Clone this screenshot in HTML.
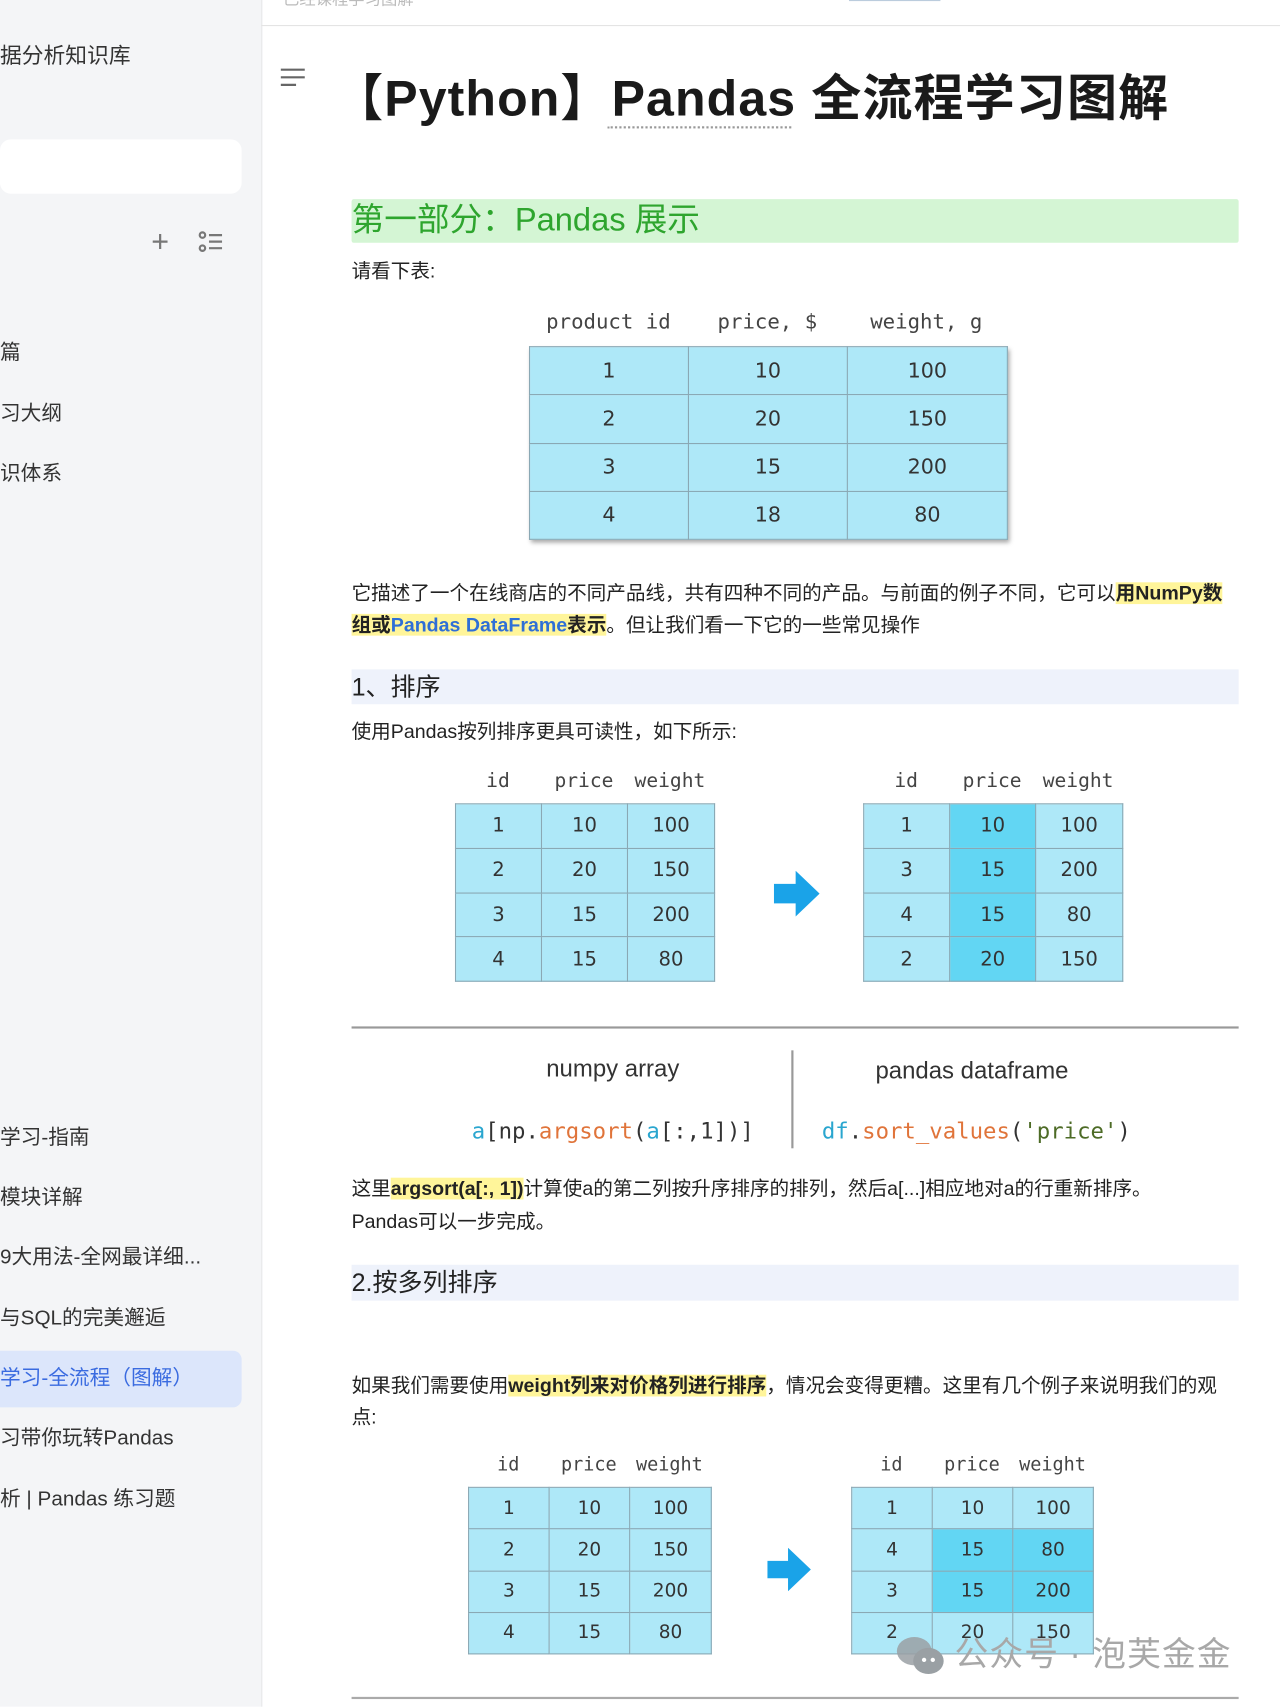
<!DOCTYPE html>
<html><head><meta charset="utf-8"><style>
html,body{margin:0;padding:0;width:1280px;height:1706px;overflow:hidden;background:#fff}
#s{position:absolute;left:0;top:0;width:1176px;height:1568px;transform:scale(1.08844);transform-origin:0 0;font-family:"Liberation Sans","Noto Sans CJK SC",sans-serif;color:#222}
.a{position:absolute;white-space:nowrap}
.side{position:absolute;left:0;top:0;width:240px;height:1568px;background:#f4f5f7;border-right:1px solid #e8e8ea}
.si{position:absolute;left:0;font-size:19px;color:#333;line-height:26px}
.p{font-size:18px;color:#222;line-height:29px}
.hl{background:#fff59a;font-weight:bold}
table{position:absolute;border-collapse:collapse;table-layout:fixed;font-family:"DejaVu Sans",sans-serif;color:#333}
td{border:1px solid #8aa8b4;background:#aee8f8;text-align:center;padding:0}
td.d{background:#62d6f3}
.hd{position:absolute;font-family:"DejaVu Sans Mono",monospace;color:#444;text-align:center}
.sec{position:absolute;left:323px;width:815px;background:#eef2fb;font-size:23px;color:#222}
.arrow{position:absolute}
</style></head><body><div id="s">
<div class="side"></div>
<div class="a" style="left:260px;top:-12px;font-size:15px;color:#bbb">已经课程学习图解</div>
<div class="a" style="left:780px;top:-2px;width:84px;height:3px;background:#bcd"></div>
<div class="a" style="left:240px;top:23px;width:936px;height:1px;background:#e4e4e4"></div>
<div class="si" style="top:39px;font-size:20px">据分析知识库</div>
<div class="a" style="left:0;top:128px;width:222px;height:50px;background:#fff;border-radius:10px"></div>
<div class="a" style="left:139px;top:208px;font-size:28px;color:#777;line-height:28px">+</div>
<svg class="a" style="left:182px;top:212px" width="24" height="22" viewBox="0 0 24 22"><g fill="none" stroke="#777" stroke-width="2"><circle cx="4" cy="4" r="2.5"/><circle cx="4" cy="16" r="2.5"/><path d="M10 4h12M10 16h12M10 10h12"/></g></svg>
<div class="si" style="top:312px">篇</div>
<div class="si" style="top:368px">习大纲</div>
<div class="si" style="top:423px">识体系</div>
<div class="si" style="top:1033px">学习-指南</div>
<div class="si" style="top:1088px"> 模块详解</div>
<div class="si" style="top:1143px">9大用法-全网最详细...</div>
<div class="si" style="top:1199px">与SQL的完美邂逅</div>
<div class="a" style="left:0;top:1241px;width:222px;height:52px;background:#dce6fb;border-radius:0 8px 8px 0"></div>
<div class="si" style="top:1254px;color:#3a6be0">学习-全流程（图解）</div>
<div class="si" style="top:1309px">习带你玩转Pandas</div>
<div class="si" style="top:1365px">析 | Pandas 练习题</div>

<svg class="a" style="left:257px;top:62px" width="24" height="20"><path d="M1 2h22M1 9h22M1 16h14" stroke="#666" stroke-width="2"/></svg>
<div class="a" style="left:306px;top:60px;font-size:46px;font-weight:bold;color:#1a1a1a;line-height:60px;letter-spacing:1px">【Python】Pandas 全流程学习图解</div>
<div class="a" style="left:558px;top:116px;width:169px;border-top:2px dotted #999"></div>

<div class="a" style="left:323px;top:183px;width:815px;height:40px;background:#d4f5d4;border-radius:2px"></div>
<div class="a" style="left:323px;top:184px;font-size:30px;color:#2ea52e;line-height:38px">第一部分：Pandas 展示</div>
<div class="a p" style="left:323px;top:235px">请看下表:</div>

<div class="hd" style="left:486px;top:285px;width:146px;font-size:19px">product id</div>
<div class="hd" style="left:632px;top:285px;width:146px;font-size:19px">price, $</div>
<div class="hd" style="left:778px;top:285px;width:146px;font-size:19px">weight, g</div>
<table style="left:486px;top:318px;width:439px;height:178px;font-size:19px;box-shadow:2px 3px 4px rgba(0,0,0,.35)">
<colgroup><col style="width:146px"><col style="width:146px"><col style="width:147px"></colgroup>
<tr><td>1</td><td>10</td><td>100</td></tr><tr><td>2</td><td>20</td><td>150</td></tr><tr><td>3</td><td>15</td><td>200</td></tr><tr><td>4</td><td>18</td><td>80</td></tr></table>

<div class="a p" style="left:323px;top:531px">它描述了一个在线商店的不同产品线，共有四种不同的产品。与前面的例子不同，它可以<span class="hl">用NumPy数</span></div>
<div class="a p" style="left:323px;top:560px"><span class="hl">组或<span style="color:#2f6fd6">Pandas DataFrame</span>表示</span>。但让我们看一下它的一些常见操作</div>

<div class="sec" style="top:615px;height:32px;line-height:32px">1、排序</div>
<div class="a p" style="left:323px;top:658px">使用Pandas按列排序更具可读性，如下所示:</div>

<div class="hd" style="left:418px;top:707px;width:79px;font-size:18px">id</div>
<div class="hd" style="left:497px;top:707px;width:79px;font-size:18px">price</div>
<div class="hd" style="left:576px;top:707px;width:79px;font-size:18px">weight</div>
<table style="left:418px;top:738px;width:238px;height:164px;font-size:18px">
<colgroup><col style="width:79px"><col style="width:79px"><col style="width:80px"></colgroup>
<tr><td>1</td><td>10</td><td>100</td></tr><tr><td>2</td><td>20</td><td>150</td></tr><tr><td>3</td><td>15</td><td>200</td></tr><tr><td>4</td><td>15</td><td>80</td></tr></table>
<svg class="arrow" style="left:711px;top:800px" width="42" height="42"><path d="M0 12h20V0l22 21-22 21V30H0z" fill="#1aa3e8"/></svg>
<div class="hd" style="left:793px;top:707px;width:79px;font-size:18px">id</div>
<div class="hd" style="left:872px;top:707px;width:79px;font-size:18px">price</div>
<div class="hd" style="left:951px;top:707px;width:79px;font-size:18px">weight</div>
<table style="left:793px;top:738px;width:238px;height:164px;font-size:18px">
<colgroup><col style="width:79px"><col style="width:79px"><col style="width:80px"></colgroup>
<tr><td>1</td><td class="d">10</td><td>100</td></tr><tr><td>3</td><td class="d">15</td><td>200</td></tr><tr><td>4</td><td class="d">15</td><td>80</td></tr><tr><td>2</td><td class="d">20</td><td>150</td></tr></table>

<div class="a" style="left:323px;top:943px;width:815px;height:2px;background:#999"></div>
<div class="a" style="left:727px;top:965px;width:2px;height:90px;background:#999"></div>
<div class="a" style="left:413px;top:969px;width:300px;text-align:center;font-size:22px;color:#333">numpy array</div>
<div class="a" style="left:743px;top:971px;width:300px;text-align:center;font-size:22px;color:#333">pandas dataframe</div>
<div class="a" style="left:413px;top:1027px;width:300px;text-align:center;font-family:'DejaVu Sans Mono',monospace;font-size:20.5px;color:#333"><span style="color:#2aa6cf">a</span>[np.<span style="color:#e0743a">argsort</span>(<span style="color:#2aa6cf">a</span>[:,1])]</div>
<div class="a" style="left:747px;top:1027px;width:300px;text-align:center;font-family:'DejaVu Sans Mono',monospace;font-size:20.5px;color:#333"><span style="color:#2aa6cf">df</span>.<span style="color:#e0743a">sort_values</span>(<span style="color:#4d6b26">'price'</span>)</div>

<div class="a p" style="left:323px;top:1078px">这里<span class="hl">argsort(a[:, 1])</span>计算使a的第二列按升序排序的排列，然后a[...]相应地对a的行重新排序。</div>
<div class="a p" style="left:323px;top:1108px">Pandas可以一步完成。</div>

<div class="sec" style="top:1162px;height:33px;line-height:33px">2.按多列排序</div>
<div class="a p" style="left:323px;top:1259px">如果我们需要使用<span class="hl">weight列来对价格列进行排序</span>，情况会变得更糟。这里有几个例子来说明我们的观</div>
<div class="a p" style="left:323px;top:1288px">点:</div>

<div class="hd" style="left:430px;top:1336px;width:74px;font-size:17px">id</div>
<div class="hd" style="left:504px;top:1336px;width:74px;font-size:17px">price</div>
<div class="hd" style="left:578px;top:1336px;width:74px;font-size:17px">weight</div>
<table style="left:430px;top:1366px;width:223px;height:154px;font-size:17px">
<colgroup><col style="width:74px"><col style="width:74px"><col style="width:75px"></colgroup>
<tr><td>1</td><td>10</td><td>100</td></tr><tr><td>2</td><td>20</td><td>150</td></tr><tr><td>3</td><td>15</td><td>200</td></tr><tr><td>4</td><td>15</td><td>80</td></tr></table>
<svg class="arrow" style="left:705px;top:1422px" width="40" height="40"><path d="M0 12h19V0l21 20-21 20V28H0z" fill="#1aa3e8"/></svg>
<div class="hd" style="left:782px;top:1336px;width:74px;font-size:17px">id</div>
<div class="hd" style="left:856px;top:1336px;width:74px;font-size:17px">price</div>
<div class="hd" style="left:930px;top:1336px;width:74px;font-size:17px">weight</div>
<table style="left:782px;top:1366px;width:222px;height:154px;font-size:17px">
<colgroup><col style="width:74px"><col style="width:74px"><col style="width:74px"></colgroup>
<tr><td>1</td><td>10</td><td>100</td></tr><tr><td>4</td><td class="d">15</td><td class="d">80</td></tr><tr><td>3</td><td class="d">15</td><td class="d">200</td></tr><tr><td>2</td><td>20</td><td>150</td></tr></table>

<svg class="a" style="left:823px;top:1503px" width="46" height="36"><ellipse cx="17" cy="14" rx="16" ry="13" fill="#9aa0a4" opacity=".85"/><ellipse cx="30" cy="23" rx="14" ry="12" fill="#9aa0a4"/><circle cx="26" cy="22" r="2" fill="#fff"/><circle cx="34" cy="22" r="2" fill="#fff"/></svg>
<div class="a" style="left:877px;top:1500px;font-size:31px;color:#a8a8a8;line-height:40px;letter-spacing:1px">公众号 · 泡芙金金</div>
<div class="a" style="left:323px;top:1559px;width:815px;height:2px;background:#aaa"></div>
</div></body></html>
